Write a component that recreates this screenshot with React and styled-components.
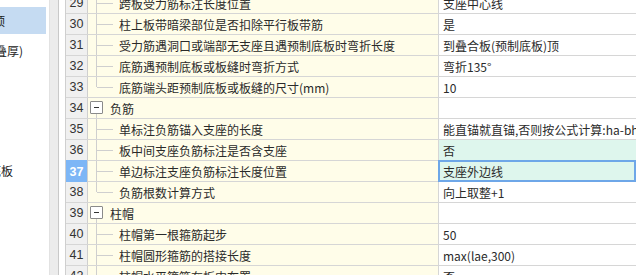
import React from "react";
import styled, { createGlobalStyle } from "styled-components";

const Global = createGlobalStyle`
  html, body { margin: 0; padding: 0; background: #fff; overflow: hidden; }
  body { font-family: "Microsoft YaHei", "Noto Sans CJK SC", "Liberation Sans", sans-serif; }
`;

const Page = styled.div`
  display: flex;
  width: 636px;
  height: 275px;
  overflow: hidden;
  background: #fff;
`;

const LeftPanel = styled.div`
  width: 49px;
  flex: none;
  overflow: hidden;
  padding-top: 7px;
  display: flex;
  flex-direction: column;
  gap: 3px;
`;

const Item = styled.div`
  height: 27px;
  width: 46px;
  display: flex;
  align-items: center;
  overflow: hidden;
  white-space: nowrap;
  font-size: 12px;
  color: #222;
  background: ${(p) => (p.$selected ? "#c5dbf2" : "transparent")};
`;

const ItemText = styled.span`
  margin-left: ${(p) => p.$shift}px;
`;

const Strip = styled.div`
  width: 8px;
  flex: none;
  background: #ececec;
  border-left: 1px solid #e2e2e2;
  border-right: 1px solid #c9c9c9;
`;

const Gap = styled.div`
  width: 6px;
  flex: none;
`;

const Grid = styled.div`
  flex: 1;
  min-width: 0;
  border-left: 1px solid #cfcfcf;
  overflow: hidden;
`;

const Body = styled.div`
  margin-top: -7px;
`;

const Row = styled.div`
  display: flex;
  height: 20px;
  border-bottom: 1px solid #d6d6d6;
`;

const Head = styled.div`
  width: 21px;
  flex: none;
  border-right: 1px solid #cfcfcf;
  background: ${(p) => (p.$active ? "#7db6f6" : "#f0f0f0")};
  color: ${(p) => (p.$active ? "#fff" : "#333")};
  font-weight: ${(p) => (p.$active ? 700 : 400)};
  font-family: "Liberation Sans", "DejaVu Sans", sans-serif;
  font-size: 12.5px;
  display: flex;
  align-items: center;
  justify-content: center;
  margin-bottom: ${(p) => (p.$active ? "-1px" : "0")};
  margin-top: ${(p) => (p.$active ? "-1px" : "0")};
  padding-top: ${(p) => (p.$active ? "1px" : "0")};
`;

const NameCell = styled.div`
  width: 350px;
  flex: none;
  border-right: 1px solid #d6d6d6;
  background: #fffde9;
  position: relative;
  display: flex;
  align-items: center;
  font-size: 12px;
  color: #2a2a2a;
  white-space: nowrap;
  overflow: hidden;
`;

const VLine = styled.div`
  position: absolute;
  left: 8px;
  width: 1px;
  background: #cfcfcf;
  top: ${(p) => (p.$from === "box" ? "16px" : "0")};
  bottom: ${(p) => (p.$half ? "10px" : "0")};
`;

const HLine = styled.div`
  position: absolute;
  left: 9px;
  top: 10px;
  width: 16px;
  height: 1px;
  background: #cfcfcf;
`;

const Toggle = styled.div`
  position: absolute;
  left: 2px;
  top: 3px;
  width: 11px;
  height: 11px;
  border: 1px solid #8a8a8a;
  border-radius: 1px;
  background: #fff;
  &::after {
    content: "";
    position: absolute;
    left: 3px;
    top: 5px;
    width: 5px;
    height: 1px;
    background: #333;
  }
`;

const Label = styled.span`
  padding-left: ${(p) => (p.$group ? "22px" : "31px")};
`;

const ValueCell = styled.div`
  flex: 1;
  min-width: 0;
  background: ${(p) => (p.$mint ? "#def6ed" : "#fff")};
  display: flex;
  align-items: center;
  padding-left: 4px;
  font-size: 12px;
  color: #2a2a2a;
  white-space: nowrap;
  overflow: hidden;
  position: relative;
  ${(p) =>
    p.$focus
      ? `margin: -1px 0 -1px -1px; padding-left: 5px; box-shadow: inset 0 0 0 2px #6ea7e8;`
      : ""}
`;

const rows = [
  { n: 29, name: "跨板受力筋标注长度位置", value: "支座中心线" },
  { n: 30, name: "柱上板带暗梁部位是否扣除平行板带筋", value: "是" },
  { n: 31, name: "受力筋遇洞口或端部无支座且遇预制底板时弯折长度", value: "到叠合板(预制底板)顶" },
  { n: 32, name: "底筋遇预制底板或板缝时弯折方式", value: "弯折135°" },
  { n: 33, name: "底筋端头距预制底板或板缝的尺寸(mm)", value: "10", last: true },
  { n: 34, name: "负筋", group: true },
  { n: 35, name: "单标注负筋锚入支座的长度", value: "能直锚就直锚,否则按公式计算:ha-bhc+15*d" },
  { n: 36, name: "板中间支座负筋标注是否含支座", value: "否", mint: true },
  { n: 37, name: "单边标注支座负筋标注长度位置", value: "支座外边线", mint: true, focus: true },
  { n: 38, name: "负筋根数计算方式", value: "向上取整+1", last: true },
  { n: 39, name: "柱帽", group: true },
  { n: 40, name: "柱帽第一根箍筋起步", value: "50" },
  { n: 41, name: "柱帽圆形箍筋的搭接长度", value: "max(lae,300)" },
  { n: 42, name: "柱帽水平箍筋在板内布置", value: "否" },
];

const leftItems = [
  { text: "板顶", shift: -19, selected: true },
  { text: "(板叠厚)", shift: -21 },
  { text: "", shift: 0 },
  { text: "", shift: 0 },
  { text: "", shift: 0 },
  { text: "底板", shift: -11 },
];

export default function App() {
  return (
    <>
      <Global />
      <Page>
        <LeftPanel>
          {leftItems.map((it, i) => (
            <Item key={i} $selected={it.selected}>
              <ItemText $shift={it.shift}>{it.text}</ItemText>
            </Item>
          ))}
        </LeftPanel>
        <Strip />
        <Gap />
        <Grid>
          <Body>
            {rows.map((r) => (
              <Row key={r.n}>
                <Head $active={r.focus}>{r.n}</Head>
                <NameCell>
                  {r.group ? (
                    <>
                      <Toggle />
                      <VLine $from="box" />
                    </>
                  ) : (
                    <>
                      <VLine $half={r.last} />
                      <HLine />
                    </>
                  )}
                  <Label $group={r.group}>{r.name}</Label>
                </NameCell>
                <ValueCell $mint={r.mint} $focus={r.focus}>
                  {r.value || ""}
                </ValueCell>
              </Row>
            ))}
          </Body>
        </Grid>
      </Page>
    </>
  );
}
